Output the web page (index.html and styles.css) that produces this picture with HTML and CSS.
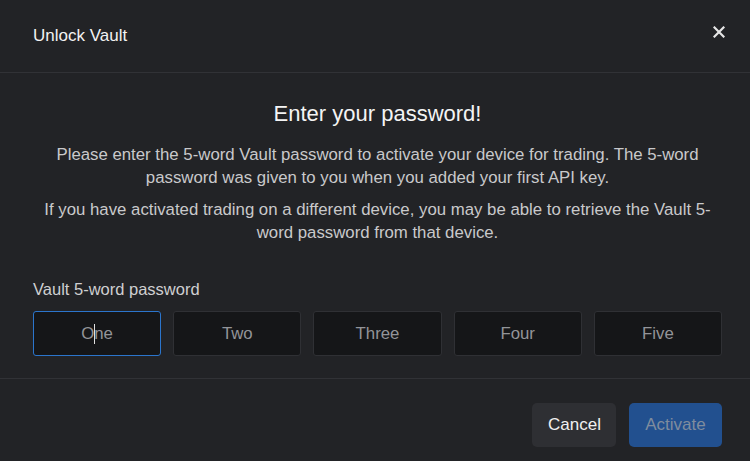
FILE: index.html
```html
<!DOCTYPE html>
<html>
<head>
<meta charset="utf-8">
<link rel="stylesheet" href="styles.css">
</head>
<body>
<div class="modal">
  <div class="modal-header">
    <h2 class="modal-title">Unlock Vault</h2>
    <button class="close" aria-label="Close">
      <svg width="12" height="12" viewBox="0 0 12 12"><path d="M1.5 1.5L10.5 10.5M10.5 1.5L1.5 10.5" stroke="#e6e6e6" stroke-width="2.2" stroke-linecap="square"/></svg>
    </button>
  </div>
  <div class="modal-body">
    <h3 class="heading">Enter your password!</h3>
    <p class="text">Please enter the 5-word Vault password to activate your device for trading. The 5-word password was given to you when you added your first API key.</p>
    <p class="text">If you have activated trading on a different device, you may be able to retrieve the Vault 5-word password from that device.</p>
    <label class="label">Vault 5-word password</label>
    <div class="words">
      <div class="word focused"><span class="ph">O</span><span class="caret"></span><span class="ph">ne</span></div>
      <div class="word"><span class="ph">Two</span></div>
      <div class="word"><span class="ph">Three</span></div>
      <div class="word"><span class="ph">Four</span></div>
      <div class="word"><span class="ph">Five</span></div>
    </div>
  </div>
  <div class="modal-footer">
    <button class="btn btn-secondary">Cancel</button>
    <button class="btn btn-primary">Activate</button>
  </div>
</div>
</body>
</html>
```

FILE: styles.css
```css
html, body {
  margin: 0;
  padding: 0;
  background: #222326;
  font-family: "Liberation Sans", Arial, sans-serif;
  color: #e8e8e8;
}
.modal {
  width: 750px;
  height: 461px;
  display: flex;
  flex-direction: column;
}
.modal-header {
  height: 73px;
  box-sizing: border-box;
  padding: 0 25px 0 33px;
  display: flex;
  align-items: center;
  justify-content: space-between;
  border-bottom: 1px solid #313236;
}
.modal-title {
  margin: 0;
  font-size: 17px;
  font-weight: normal;
  color: #f2f2f2;
}
.close {
  background: none;
  border: 0;
  padding: 0;
  width: 12px;
  height: 12px;
  display: flex;
  margin-top: -8px;
}
.modal-body {
  padding: 27px 28px 0 33px;
  height: 306px;
  box-sizing: border-box;
  border-bottom: 1px solid #313236;
}
.heading {
  margin: 0 0 15px;
  text-align: center;
  font-size: 22px;
  line-height: 28px;
  font-weight: normal;
  color: #f4f4f4;
}
.text {
  margin: 0 0 9px;
  text-align: center;
  font-size: 16.8px;
  line-height: 23px;
  color: #c9c9cb;
}
.label {
  display: block;
  margin-top: 35px;
  font-size: 16.5px;
  line-height: 20px;
  color: #cfcfd1;
}
.words {
  margin-top: 12px;
  display: grid;
  grid-template-columns: repeat(5, 1fr);
  gap: 12px;
}
.word {
  height: 45px;
  box-sizing: border-box;
  background: #151618;
  border: 1px solid #2f3034;
  border-radius: 3px;
  display: flex;
  align-items: center;
  justify-content: center;
  font-size: 16.8px;
  color: #939498;
}
.word.focused {
  border-color: #2b75cc;
}
.caret {
  display: inline-block;
  width: 1px;
  height: 20px;
  background: #e0e0e0;
  margin: 0 -1px 0 0;
}
.modal-footer {
  flex: 1;
  display: flex;
  justify-content: flex-end;
  align-items: flex-start;
  gap: 13px;
  padding: 24px 28px 0 0;
}
.btn {
  height: 44px;
  border: 0;
  border-radius: 5px;
  font-family: "Liberation Sans", Arial, sans-serif;
  font-size: 17px;
  padding: 0 16px;
}
.btn-secondary {
  width: 84px;
  background: #2e2f33;
  color: #f0f0f0;
}
.btn-primary {
  width: 93px;
  background: #22508f;
  color: #7f8c9e;
}
```
